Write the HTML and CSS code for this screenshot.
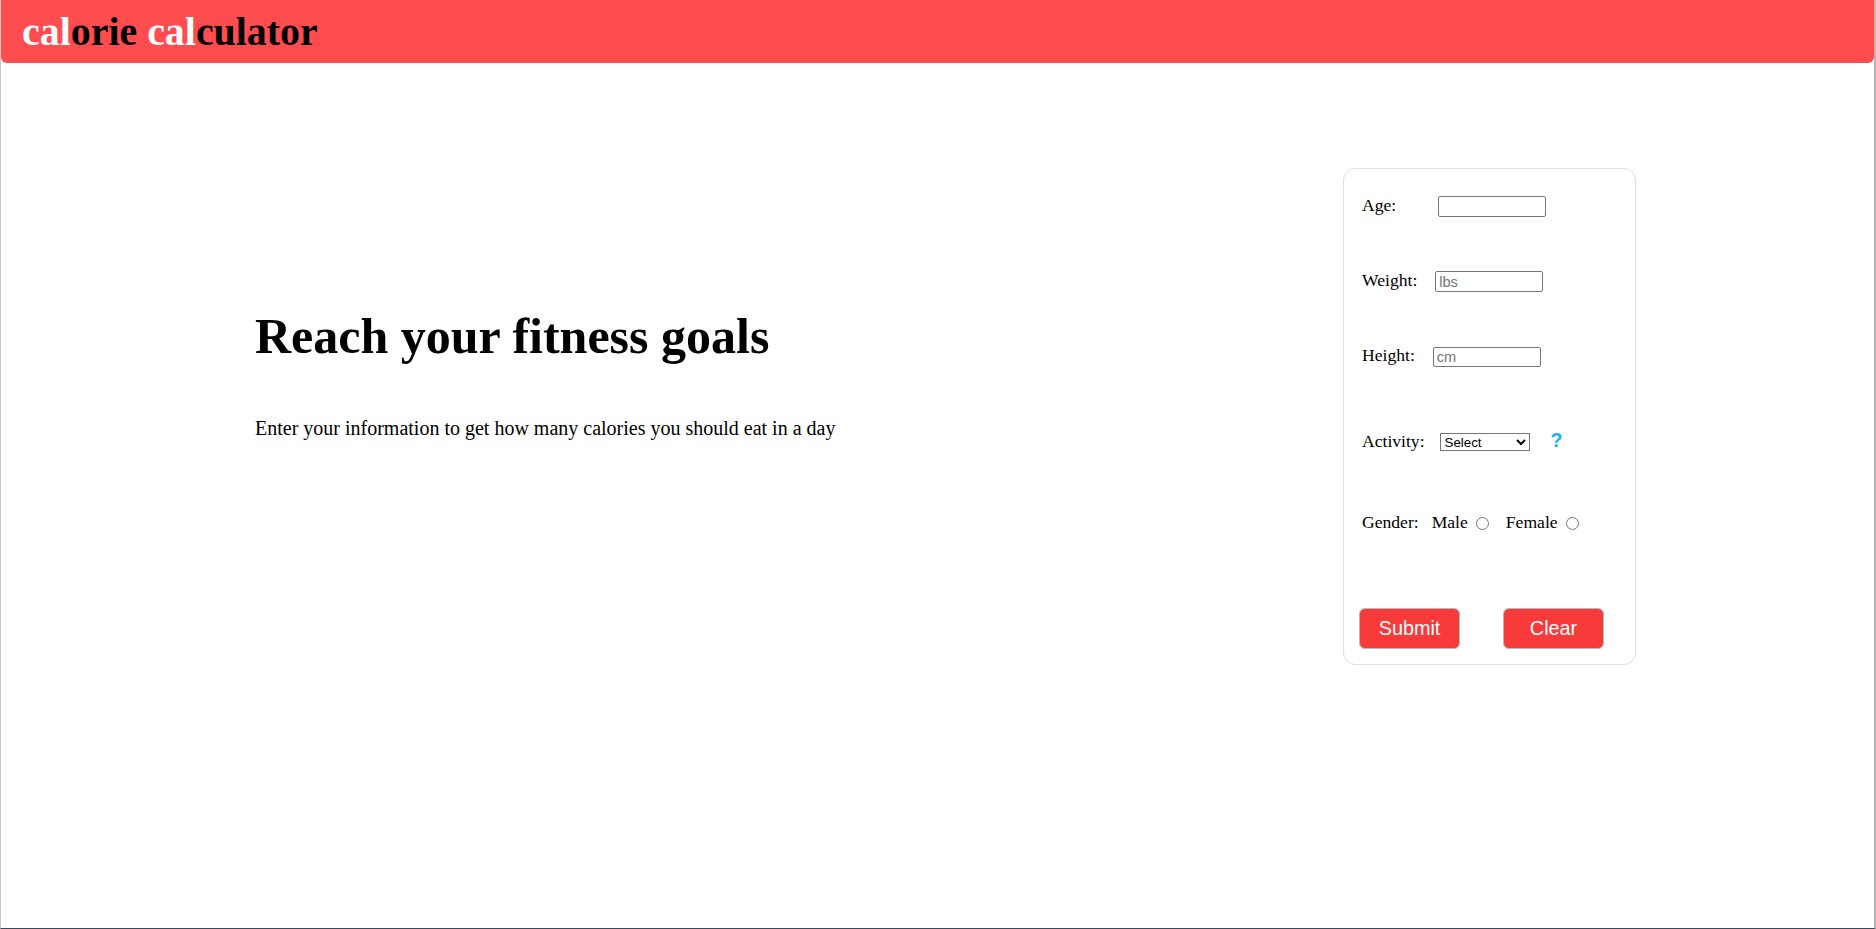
FILE: index.html
```html
<!DOCTYPE html>
<html lang="en">
<head>
<meta charset="utf-8">
<title>calorie calculator</title>
<link rel="stylesheet" href="styles.css">
</head>
<body>
<div class="frame">
  <header class="topbar">
    <h1 class="logo"><span class="hl">cal</span>orie <span class="hl">cal</span>culator</h1>
  </header>
  <main class="main">
    <section class="intro">
      <h2 class="headline">Reach your fitness goals</h2>
      <p class="lead">Enter your information to get how many calories you should eat in a day</p>
    </section>
    <form class="card">
      <div class="row row-age">
        <label class="lbl">Age:</label>
        <input class="field field-age" type="text">
      </div>
      <div class="row row-weight">
        <label class="lbl">Weight:</label>
        <input class="field field-gap" type="text" placeholder="lbs">
      </div>
      <div class="row row-height">
        <label class="lbl">Height:</label>
        <input class="field field-gap field-height" type="text" placeholder="cm">
      </div>
      <div class="row row-activity">
        <label class="lbl">Activity:</label>
        <select class="picker">
          <option>Select</option>
        </select>
        <span class="help">?</span>
      </div>
      <div class="row row-gender">
        <span class="lbl">Gender:</span>
        <span class="lbl opt-male">Male</span>
        <input class="radio" type="radio" name="g">
        <span class="lbl opt-female">Female</span>
        <input class="radio" type="radio" name="g">
      </div>
      <div class="row row-buttons">
        <button class="btn" type="button">Submit</button>
        <button class="btn btn-clear" type="button">Clear</button>
      </div>
    </form>
  </main>
</div>
</body>
</html>
```

FILE: styles.css
```css
html, body {
  margin: 0;
  padding: 0;
  background: #ffffff;
}

body {
  font-family: "Liberation Serif", "Times New Roman", serif;
  color: #000;
}

.frame {
  width: 1876px;
  height: 929px;
  box-sizing: border-box;
  border-left: 1px solid #c8c8c8;
  border-right: 2px solid #b4b4b4;
  border-bottom: 1px solid #3b4862;
  display: flex;
  flex-direction: column;
  overflow: hidden;
}

.topbar {
  height: 63px;
  flex: 0 0 63px;
  background: #ff4c4f;
  border-radius: 0 0 6px 6px;
  display: flex;
  align-items: center;
  padding-left: 21px;
}

.logo {
  margin: 0;
  font-size: 39.9px;
  font-weight: bold;
  line-height: 1.15;
  color: #000;
}

.hl {
  color: #ffffff;
}

.main {
  flex: 1;
  display: flex;
  align-items: flex-start;
  padding-left: 254px;
  padding-right: 238px;
}

.intro {
  margin-top: 245px;
}

.headline {
  margin: 0;
  font-size: 50px;
  font-weight: bold;
  line-height: 1.15;
}

.lead {
  margin: 51px 0 0;
  font-size: 20px;
  line-height: 1.15;
}

.card {
  margin-top: 105px;
  margin-left: auto;
  width: 293px;
  box-sizing: border-box;
  border: 1px solid #dedede;
  border-radius: 12px;
  padding: 27px 0 15px 0;
  display: flex;
  flex-direction: column;
}

.row {
  display: flex;
  align-items: center;
  height: 21px;
  padding-left: 18px;
  font-size: 17.6px;
  line-height: 1.15;
}

.row-weight { margin-top: 54px; }
.row-height { margin-top: 54px; }
.row-activity { margin-top: 65px; }
.row-gender { margin-top: 60px; }

.row-buttons {
  margin-top: 74px;
  height: 41px;
  padding-left: 15px;
}

.lbl {
  white-space: nowrap;
  margin-bottom: 2px;
}

.field {
  width: 108px;
  height: 21px;
  box-sizing: border-box;
  border: 1px solid #767676;
  border-radius: 2px;
  padding: 1px 3px;
  font-family: "Liberation Sans", Arial, sans-serif;
  font-size: 14.6px;
  background: #fff;
}

.field::placeholder {
  color: #757575;
}

.field-age { margin-left: 42px; }
.field-gap { margin-left: 18px; }
.field-height { height: 20px; }

.picker {
  margin-left: 15px;
  margin-bottom: 2px;
  width: 90px;
  height: 18px;
  box-sizing: border-box;
  border: 1px solid #767676;
  border-radius: 0;
  font-family: "Liberation Sans", Arial, sans-serif;
  font-size: 13.3px;
  padding: 0;
  background: #fff;
  color: #000;
}

.help {
  margin-left: 21px;
  margin-bottom: 4px;
  font-family: "Liberation Sans", Arial, sans-serif;
  font-weight: bold;
  font-size: 19.5px;
  color: #16b1f7;
  line-height: 1;
}

.opt-male { margin-left: 13px; }
.opt-female { margin-left: 17px; }

.radio {
  width: 13px;
  height: 13px;
  margin: 0 0 0 8px;
}

.btn {
  width: 101px;
  height: 41px;
  box-sizing: border-box;
  background: #f83a3b;
  color: #ffffff;
  border: 1px solid #b9b9b9;
  border-radius: 6px;
  font-family: "Liberation Sans", Arial, sans-serif;
  font-size: 19.8px;
  padding: 0;
  cursor: pointer;
}

.btn-clear {
  margin-left: 43px;
}
```
